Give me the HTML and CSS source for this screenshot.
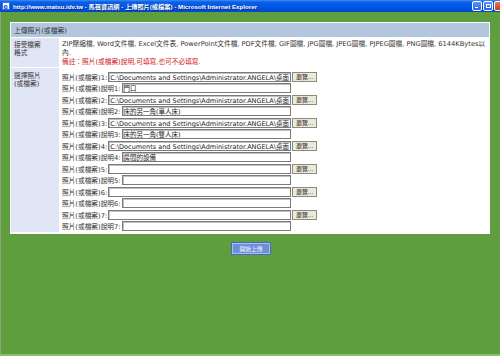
FILE: index.html
```html
<!DOCTYPE html>
<html>
<head>
<meta charset="utf-8">
<link rel="stylesheet" href="styles.css">
</head>
<body>
<div class="titlebar">
  <svg class="ico" viewBox="0 0 8 8" width="8" height="8"><rect x="0.5" y="0.5" width="7" height="7" fill="#fff" stroke="#3a6fd0"/><text x="1.2" y="6.6" font-size="7" font-family="DejaVu Sans" font-weight="bold" fill="#2a5cc8">e</text></svg>
  <span class="title">http://www.matsu.idv.tw - 馬祖資訊網 - 上傳照片(或檔案) - Microsoft Internet Explorer</span>
  <div class="ctrls"><span class="cb"><i class="bar"></i></span><span class="cb"><i class="sq"></i></span><span class="cb close"></span></div>
</div>
<div class="client">
  <div class="panel">
    <div class="head">上傳照片(或檔案)</div>
    <div class="label">接受檔案<br>格式</div>
    <div class="content">
      <div class="formats">ZIP壓縮檔, Word文件檔, Excel文件表, PowerPoint文件檔, PDF文件檔, GIF圖檔, JPG圖檔, JPEG圖檔, PJPEG圖檔, PNG圖檔, 6144KBytes以內.</div>
      <div class="note">備註：照片(或檔案)說明,可填寫,也可不必填寫.</div>
    </div>
    <div class="label lbl2">選擇照片<br>(或檔案)</div>
    <div class="content form">
      <div class="frow">照片(或檔案)1:<input class="file" value="C:\Documents and Settings\Administrator.ANGELA\桌面"><span class="browse">瀏覽...</span></div>
      <div class="frow">照片(或檔案)說明1:<input class="desc" value="門口"></div>
      <div class="frow">照片(或檔案)2:<input class="file" value="C:\Documents and Settings\Administrator.ANGELA\桌面"><span class="browse">瀏覽...</span></div>
      <div class="frow">照片(或檔案)說明2:<input class="desc" value="床的另一角(單人床)"></div>
      <div class="frow">照片(或檔案)3:<input class="file" value="C:\Documents and Settings\Administrator.ANGELA\桌面"><span class="browse">瀏覽...</span></div>
      <div class="frow">照片(或檔案)說明3:<input class="desc" value="床的另一角(雙人床)"></div>
      <div class="frow">照片(或檔案)4:<input class="file" value="C:\Documents and Settings\Administrator.ANGELA\桌面"><span class="browse">瀏覽...</span></div>
      <div class="frow">照片(或檔案)說明4:<input class="desc" value="房間的設備"></div>
      <div class="frow">照片(或檔案)5:<input class="file" value=""><span class="browse">瀏覽...</span></div>
      <div class="frow">照片(或檔案)說明5:<input class="desc" value=""></div>
      <div class="frow">照片(或檔案)6:<input class="file" value=""><span class="browse">瀏覽...</span></div>
      <div class="frow">照片(或檔案)說明6:<input class="desc" value=""></div>
      <div class="frow">照片(或檔案)7:<input class="file" value=""><span class="browse">瀏覽...</span></div>
      <div class="frow">照片(或檔案)說明7:<input class="desc" value=""></div>
    </div>
  </div>
  <div class="submit"><span class="go">開始上傳</span></div>
</div>
</body>
</html>
```

FILE: styles.css
```css
* { box-sizing: border-box; }
html, body { margin: 0; padding: 0; }
body {
  width: 500px;
  height: 356px;
  overflow: hidden;
  background: #5e9e3e;
  font-family: "DejaVu Sans", "Noto Sans CJK TC", sans-serif;
  color: #333;
}
.titlebar {
  height: 12px;
  background: linear-gradient(#3f8cf6 0, #0b5fe6 2px, #0055e2 60%, #0046cf 100%);
  display: flex;
  align-items: center;
  padding-left: 2px;
}
.ico { flex: none; }
.title {
  color: #fff;
  font-weight: bold;
  font-size: 6.2px;
  margin-left: 3px;
  white-space: nowrap;
  font-family: "Liberation Sans", "Noto Sans CJK TC", sans-serif;
  text-shadow: 1px 1px 0 #0a2a80;
}
.ctrls { margin-left: auto; display: flex; gap: 1px; margin-right: -4px; }
.cb {
  width: 10px; height: 10px;
  border: 1px solid #fff;
  border-radius: 2px;
  background: linear-gradient(#5d95f8, #2863e6);
  position: relative;
}
.cb.close { background: linear-gradient(#ea7a5a, #c8381a); }
.bar { position: absolute; left: 2px; bottom: 2px; width: 3px; height: 1px; background: #fff; }
.sq { position: absolute; left: 2px; top: 2px; width: 5px; height: 4px; border: 1px solid #fff; }
.client {
  height: 344px;
  border-left: 1px solid #8aa878;
  border-bottom: 2px solid #8cbf6c;
  padding-top: 10px;
}
.panel {
  margin-left: 9px;
  width: 480px;
  background: #fff;
  padding: 1px 1px 2px 1px;
  display: grid;
  grid-template-columns: 48px 1fr;
  grid-template-rows: 14px 29px 164px;
  column-gap: 1px;
  row-gap: 1px;
  font-size: 6.7px;
}
.head {
  grid-column: 1 / -1;
  background: #b2c6dd;
  padding-left: 3px;
  display: flex;
  align-items: center;
  font-size: 6.8px;
}
.label {
  background: #e0e6f5;
  padding: 3px 3px;
  line-height: 8px;
  font-size: 6.7px;
}
.lbl2 { padding-top: 4px; }
.content { padding: 2px 1px 0 2px; line-height: 9px; }
.note { color: #d02020; }
.form { padding-top: 3px; line-height: normal; }
.frow {
  height: 11.5px;
  display: flex;
  align-items: center;
  white-space: nowrap;
}
input {
  font-family: "DejaVu Sans", "Noto Sans CJK TC", sans-serif;
  font-size: 6.5px;
  height: 10px;
  padding: 0 1px;
  margin: 0 0 0 1px;
  border: 1px solid #7a7a7a;
  box-shadow: inset 1px 1px 0 #c0c0c0;
  background: #fff;
  color: #222;
  outline: none;
}
.file { width: 183px; }
.desc { width: 169px; }
.browse {
  margin-left: 1px;
  width: 25px;
  height: 10px;
  background: #ece9d8;
  border: 1px solid #8c8a7c;
  font-size: 5.8px;
  display: flex;
  align-items: center;
  justify-content: center;
  color: #222;
}
.submit { display: flex; justify-content: center; padding-top: 9px; padding-left: 1px; }
.go {
  width: 38px;
  height: 11px;
  background: #6d8fd9;
  border: 1px solid #a9c0ee;
  box-shadow: 0 0 0 1px #4a6ab8;
  color: #f4f6ff;
  font-size: 5.8px;
  display: flex;
  align-items: center;
  justify-content: center;
}
```
